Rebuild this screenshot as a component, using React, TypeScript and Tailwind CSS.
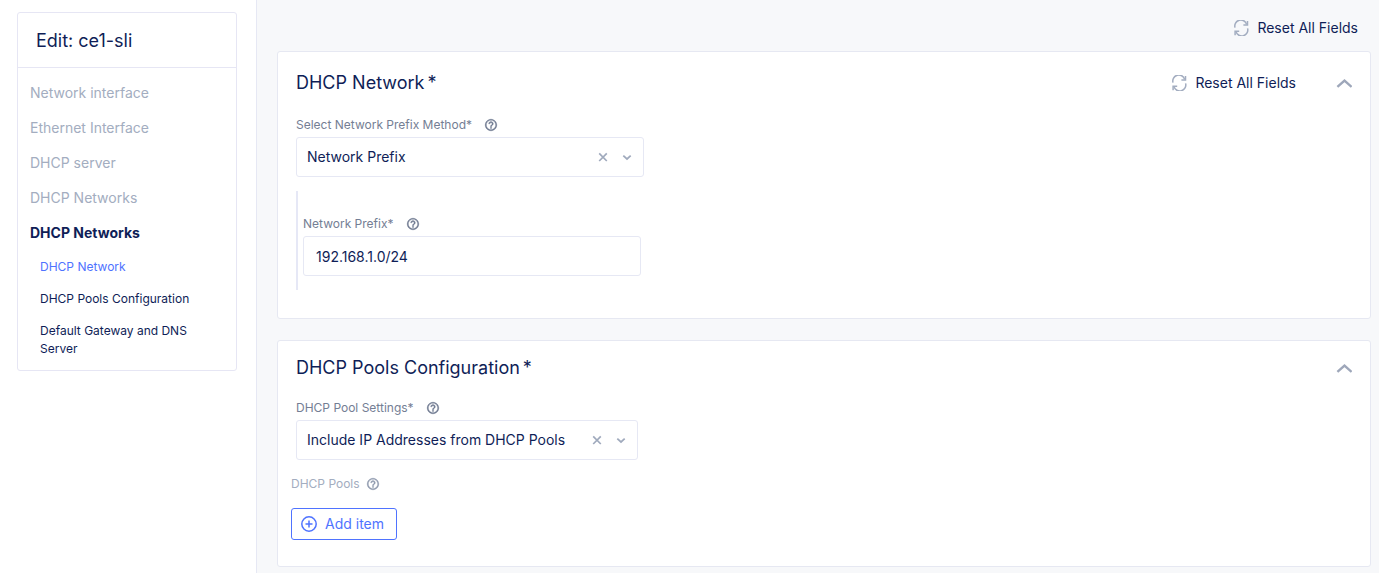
import { useState } from "react";
import type { ReactNode } from "react";

function ResetIcon() {
  return (
    <svg className="size-4 shrink-0 text-[#a3adc0]" viewBox="0 0 16 16" fill="none" stroke="currentColor" strokeWidth="1.5" aria-hidden="true">
      <path d="M2 7.6A6 6 0 0 1 13.6 4.4" />
      <path d="M14.5 1V4.9H10.4" />
      <path d="M14.6 8.4A6 6 0 0 1 3 11.6" />
      <path d="M2.1 15.2V11.3H6.2" />
    </svg>
  );
}

function HelpIcon() {
  return (
    <svg className="size-[14px]" viewBox="0 0 24 24" fill="currentColor" stroke="currentColor" strokeWidth="0.6" aria-hidden="true">
      <path d="M11 18h2v-2h-2v2zm1-16C6.48 2 2 6.48 2 12s4.48 10 10 10 10-4.48 10-10S17.52 2 12 2zm0 18c-4.41 0-8-3.59-8-8s3.59-8 8-8 8 3.59 8 8-3.59 8-8 8zm0-14c-2.21 0-4 1.79-4 4h2c0-1.1.9-2 2-2s2 .9 2 2c0 2-3 1.75-3 5h2c0-2.25 3-2.5 3-5 0-2.21-1.79-4-4-4z" />
    </svg>
  );
}

function ChevronUp() {
  return (
    <svg className="h-4 w-4" viewBox="0 0 16 16" fill="none" stroke="currentColor" strokeWidth="2.4" aria-hidden="true">
      <path d="M1.4 11.9L8.5 5.5L15.6 11.9" />
    </svg>
  );
}

function PlusCircle() {
  return (
    <svg className="size-4" viewBox="0 0 16 16" fill="none" stroke="currentColor" strokeWidth="1.5" aria-hidden="true">
      <circle cx="8" cy="8" r="7.2" />
      <path d="M8 4.5V11.5M4.5 8H11.5" />
    </svg>
  );
}

function ResetButton() {
  return (
    <button type="button" className="flex items-center gap-2 text-sm">
      <ResetIcon />
      Reset All Fields
    </button>
  );
}

function Help({ topic, className }: { topic: string; className: string }) {
  return (
    <button type="button" aria-label={`Help: ${topic}`} className={className}>
      <HelpIcon />
    </button>
  );
}

function FieldLabel({ id, text }: { id: string; text: string }) {
  return (
    <div className="flex h-6 items-center gap-3 text-xs text-[#747e94]">
      <label htmlFor={id}>{text}*</label>
      <Help topic={text} className="text-[#6f7990]" />
    </div>
  );
}

function SelectField({ id, label, option, width }: { id: string; label: string; option: string; width: string }) {
  const [value, setValue] = useState(option);
  return (
    <div className={`max-w-full ${width}`}>
      <FieldLabel id={id} text={label} />
      <div className="relative">
        <select
          id={id}
          value={value}
          onChange={(e) => setValue(e.target.value)}
          className="h-10 w-full appearance-none rounded-[3px] border border-[#e6e8f4] bg-white pr-16 pl-[10px] text-sm"
        >
          <option value="" />
          <option value={option}>{option}</option>
        </select>
        <div className="pointer-events-none absolute inset-y-0 right-0 flex items-center gap-3 pr-[11px] text-[#a0aabd]">
          <button type="button" aria-label={`Clear ${label}`} onClick={() => setValue("")} className="pointer-events-auto">
            <svg className="size-3" viewBox="0 0 12 12" fill="none" stroke="currentColor" strokeWidth="1.7" aria-hidden="true">
              <path d="M2.2 2.4L9.8 10M9.8 2.4L2.2 10" />
            </svg>
          </button>
          <svg className="size-3" viewBox="0 0 12 12" fill="none" stroke="currentColor" strokeWidth="1.7" aria-hidden="true">
            <path d="M2.3 4.6L6 8L9.7 4.6" />
          </svg>
        </div>
      </div>
    </div>
  );
}

function Panel({ title, actions, className, children }: { title: string; actions?: ReactNode; className: string; children: ReactNode }) {
  const [open, setOpen] = useState(true);
  return (
    <section className={`rounded-[3px] border border-[#e6e8f2] bg-white ${className}`}>
      <header className="flex items-center justify-between px-[18px]">
        <h2 className="text-lg leading-6">
          {title}
          <span className="ml-[3px]">*</span>
        </h2>
        <div className="flex items-center gap-10">
          {actions}
          <button type="button" aria-label={`Toggle ${title}`} aria-expanded={open} onClick={() => setOpen(!open)} className="text-[#9ea7ba]">
            <ChevronUp />
          </button>
        </div>
      </header>
      {open && children}
    </section>
  );
}

const steps = ["Network interface", "Ethernet Interface", "DHCP server", "DHCP Networks"];

export default function App() {
  const [prefix, setPrefix] = useState("192.168.1.0/24");
  return (
    <div className="flex min-h-screen bg-[#f7f8fa] font-['Inter',sans-serif] text-[#0f1e57]">
      <aside className="w-[257px] shrink-0 border-r border-[#e6e8f4] bg-white pt-3 pr-[19px] pl-[17px]">
        <nav className="rounded-[3px] border border-[#e6e6f4] pb-[5px]" aria-label="Form sections">
          <h1 className="border-b border-[#e6e6f4] px-[18px] pt-4 pb-[14px] text-lg leading-6">Edit: ce1-sli</h1>
          <ul className="px-3 pt-[7px] text-sm leading-[35px] text-[#a3adc0]">
            {steps.map((step) => (
              <li key={step}>
                <a href="#">{step}</a>
              </li>
            ))}
            <li>
              <a href="#" className="font-bold text-[#0f1e57]">DHCP Networks</a>
              <ul className="pt-px pl-[10px] text-xs leading-[18px] text-[#0f1e57]">
                <li className="py-[7px] text-[#4f73ff]">
                  <a href="#dhcp-network">DHCP Network</a>
                </li>
                <li className="py-[7px]">
                  <a href="#dhcp-pools">DHCP Pools Configuration</a>
                </li>
                <li className="py-[7px]">
                  <a href="#gateway">Default Gateway and DNS Server</a>
                </li>
              </ul>
            </li>
          </ul>
        </nav>
      </aside>

      <main className="min-w-0 flex-1 pt-[18px] pr-2 pl-5">
        <div className="flex justify-end pr-[13px] pb-[13px]">
          <ResetButton />
        </div>

        <Panel title="DHCP Network" actions={<ResetButton />} className="pt-[19px] pb-7">
          <div className="px-[18px] pt-[18px]">
            <SelectField id="prefix-method" label="Select Network Prefix Method" option="Network Prefix" width="w-[348px]" />
            <div className="mt-[14px] border-l-2 border-[#e6e8f6] pt-[21px] pb-[14px] pl-[5px]">
              <FieldLabel id="network-prefix" text="Network Prefix" />
              <input
                id="network-prefix"
                type="text"
                value={prefix}
                onChange={(e) => setPrefix(e.target.value)}
                className="block h-10 w-[338px] max-w-full rounded-[3px] border border-[#e6e8f4] bg-white px-3 text-sm"
              />
            </div>
          </div>
        </Panel>

        <Panel title="DHCP Pools Configuration" className="mt-[21px] pt-[15px] pb-[26px]">
          <div className="px-[18px] pt-[16px]">
            <SelectField id="pool-settings" label="DHCP Pool Settings" option="Include IP Addresses from DHCP Pools" width="w-[342px]" />
          </div>
          <div className="px-[13px] pt-3">
            <div className="flex h-6 items-center gap-1.5 text-xs text-[#a3adc0]">
              <h3>DHCP Pools</h3>
              <Help topic="DHCP Pools" className="text-[#8f99ad]" />
            </div>
            <button type="button" className="mt-3 flex h-8 items-center gap-2 rounded-[3px] border border-[#4f73ff] pr-3 pl-[9px] text-sm text-[#4f73ff]">
              <PlusCircle />
              Add item
            </button>
          </div>
        </Panel>
      </main>
    </div>
  );
}
